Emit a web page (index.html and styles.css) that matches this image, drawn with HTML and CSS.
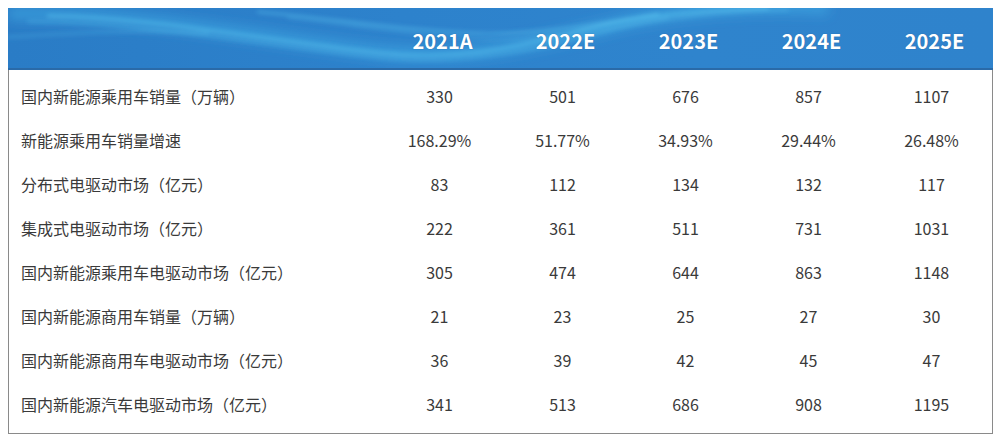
FILE: index.html
```html
<!DOCTYPE html>
<html lang="zh">
<head>
<meta charset="utf-8">
<link rel="stylesheet" href="styles.css">
</head>
<body>
<div class="table">
  <div class="head">
    <svg class="waves" viewBox="0 0 985 62" preserveAspectRatio="none" aria-hidden="true">
      <defs>
        <filter id="blur" x="-10%" y="-50%" width="120%" height="200%"><feGaussianBlur stdDeviation="2"/></filter>
        <filter id="blur2" x="-10%" y="-50%" width="120%" height="200%"><feGaussianBlur stdDeviation="6"/></filter>
      </defs>
      <g filter="url(#blur2)" fill="none" stroke="#48b8ea" stroke-opacity="0.45">
        <path d="M0 6 C120 4 250 30 360 44 C450 56 520 40 620 14 C680 0 760 -4 820 0" stroke-width="14"/>
      </g>
      <g filter="url(#blur)" fill="none" stroke="#5fcaf2" stroke-linecap="round">
        <path d="M40 8 C150 10 260 34 370 46 C440 54 500 44 570 24 C620 10 680 2 760 0" stroke-width="2" stroke-opacity="0.75"/>
        <path d="M20 14 C140 14 260 40 380 52 C450 58 520 46 590 26 C640 12 700 4 780 2" stroke-width="1.6" stroke-opacity="0.55"/>
        <path d="M250 4 C320 10 400 24 470 26 C530 28 580 18 650 6" stroke-width="2" stroke-opacity="0.6"/>
        <path d="M280 10 C350 18 420 30 480 32 C540 34 590 22 660 10" stroke-width="1.4" stroke-opacity="0.45"/>
        <path d="M0 30 C60 26 120 22 200 26" stroke-width="3" stroke-opacity="0.25"/>
      </g>
    </svg>
    <div class="cell label"></div>
    <div class="cell">2021A</div>
    <div class="cell">2022E</div>
    <div class="cell">2023E</div>
    <div class="cell">2024E</div>
    <div class="cell">2025E</div>
  </div>
  <div class="body">
    <div class="row"><div class="cell label">国内新能源乘用车销量（万辆）</div><div class="cell">330</div><div class="cell">501</div><div class="cell">676</div><div class="cell">857</div><div class="cell">1107</div></div>
    <div class="row"><div class="cell label">新能源乘用车销量增速</div><div class="cell">168.29%</div><div class="cell">51.77%</div><div class="cell">34.93%</div><div class="cell">29.44%</div><div class="cell">26.48%</div></div>
    <div class="row"><div class="cell label">分布式电驱动市场（亿元）</div><div class="cell">83</div><div class="cell">112</div><div class="cell">134</div><div class="cell">132</div><div class="cell">117</div></div>
    <div class="row"><div class="cell label">集成式电驱动市场（亿元）</div><div class="cell">222</div><div class="cell">361</div><div class="cell">511</div><div class="cell">731</div><div class="cell">1031</div></div>
    <div class="row"><div class="cell label">国内新能源乘用车电驱动市场（亿元）</div><div class="cell">305</div><div class="cell">474</div><div class="cell">644</div><div class="cell">863</div><div class="cell">1148</div></div>
    <div class="row"><div class="cell label">国内新能源商用车销量（万辆）</div><div class="cell">21</div><div class="cell">23</div><div class="cell">25</div><div class="cell">27</div><div class="cell">30</div></div>
    <div class="row"><div class="cell label">国内新能源商用车电驱动市场（亿元）</div><div class="cell">36</div><div class="cell">39</div><div class="cell">42</div><div class="cell">45</div><div class="cell">47</div></div>
    <div class="row"><div class="cell label">国内新能源汽车电驱动市场（亿元）</div><div class="cell">341</div><div class="cell">513</div><div class="cell">686</div><div class="cell">908</div><div class="cell">1195</div></div>
  </div>
</div>
</body>
</html>
```
FILE: styles.css
```css
html, body {
  margin: 0;
  padding: 0;
  background: #ffffff;
}
body {
  padding: 8px;
  font-family: "Noto Sans CJK SC", "Noto Sans", sans-serif;
}
.table {
  width: 985px;
  box-sizing: border-box;
  border: 1px solid #8a8a8a;
  border-top: none;
}
.head {
  position: relative;
  height: 62px;
  margin: 0 -1px;
  display: grid;
  grid-template-columns: 370px repeat(5, 123px);
  align-items: center;
  background: linear-gradient(90deg, #2a7cc6 0%, #2d82cc 40%, #2f84cd 70%, #2f83cc 100%);
  border-bottom: 2px solid #2a6aa8;
  box-sizing: border-box;
  overflow: hidden;
}
.waves {
  position: absolute;
  left: 0;
  top: 0;
  width: 100%;
  height: 100%;
}
.head .cell {
  position: relative;
  text-align: center;
  color: #ffffff;
  font-weight: 700;
  font-size: 20px;
  padding-top: 4px;
  padding-left: 6px;
  text-shadow: 0 0 1px rgba(0, 40, 90, 0.4);
}
.body {
  padding: 4px 0 7px;
}
.row {
  height: 44px;
  display: grid;
  grid-template-columns: 369px repeat(5, 123px);
  align-items: center;
  color: #3a3a3a;
  font-size: 16px;
}
.row .cell {
  text-align: center;
}
.row .cell.label {
  text-align: left;
  padding-left: 12px;
}
```
